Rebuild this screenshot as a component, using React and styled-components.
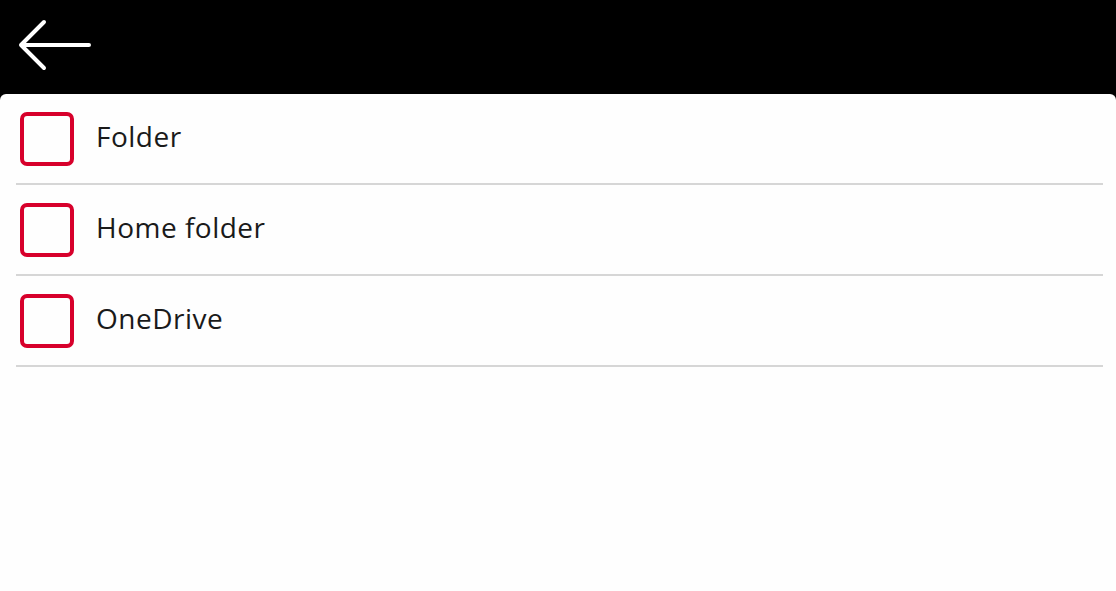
import React from "react";
import styled, { createGlobalStyle } from "styled-components";

const GlobalStyle = createGlobalStyle`
  html, body {
    margin: 0;
    padding: 0;
    background: #000;
  }
  body {
    font-family: "Open Sans", "Noto Sans", sans-serif;
  }
`;

const Screen = styled.div`
  width: 1116px;
  height: 591px;
  display: flex;
  flex-direction: column;
  background: #000;
  overflow: hidden;
`;

const TopBar = styled.header`
  height: 94px;
  flex-shrink: 0;
  display: flex;
  align-items: center;
  padding: 0 0 4px 17px;
  box-sizing: border-box;
`;

const BackButton = styled.button`
  width: 76px;
  height: 56px;
  padding: 0;
  border: 0;
  background: none;
  display: flex;
  align-items: center;
  justify-content: flex-start;
  cursor: pointer;
`;

const Panel = styled.main`
  flex: 1;
  background: #fefefe;
  border-radius: 6px 6px 0 0;
  padding: 0 13px 0 16px;
`;

const List = styled.ul`
  list-style: none;
  margin: 0;
  padding: 0;
`;

const Row = styled.li`
  height: 91px;
  box-sizing: border-box;
  display: flex;
  align-items: center;
  gap: 22px;
  padding: 0 0 0 4px;
  border-bottom: 2px solid #d6d6d6;
`;

const Box = styled.span`
  width: 54px;
  height: 54px;
  box-sizing: border-box;
  border: 4px solid #d7002b;
  border-radius: 7px;
  flex-shrink: 0;
`;

const Label = styled.span`
  font-size: 28px;
  line-height: 38px;
  margin-bottom: 6px;
  color: #1a1a1a;
  letter-spacing: 0.5px;
`;

const items = ["Folder", "Home folder", "OneDrive"];

const App = () => {
  return (
    <Screen>
      <GlobalStyle />
      <TopBar>
        <BackButton aria-label="Back">
          <svg width="76" height="56" viewBox="0 0 76 56" fill="none">
            <path
              d="M4 28 H72 M4 28 L27 5 M4 28 L27 51"
              stroke="#fff"
              strokeWidth="4"
              strokeLinecap="round"
              strokeLinejoin="round"
            />
          </svg>
        </BackButton>
      </TopBar>
      <Panel>
        <List>
          {items.map((item) => (
            <Row key={item}>
              <Box />
              <Label>{item}</Label>
            </Row>
          ))}
        </List>
      </Panel>
    </Screen>
  );
};

export default App;
